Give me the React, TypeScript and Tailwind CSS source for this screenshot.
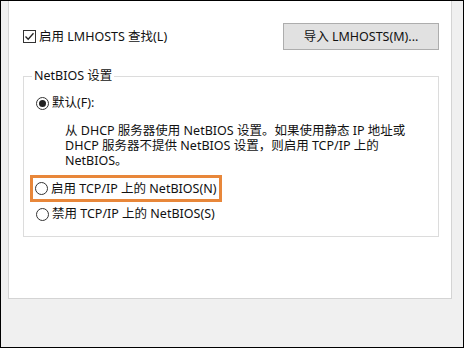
import React from "react";

function CheckBox() {
  return (
    <span className="flex h-[13px] w-[13px] shrink-0 items-center justify-center border border-[#333] bg-white">
      <svg width="11" height="11" viewBox="0 0 11 11">
        <path d="M1.5 5.5 L4.2 8.3 L9.5 2.3" fill="none" stroke="#222" strokeWidth="1.3" />
      </svg>
    </span>
  );
}

function Radio({ on }: { on?: boolean }) {
  return (
    <span className="flex h-[13px] w-[13px] shrink-0 items-center justify-center rounded-full border border-[#333] bg-white">
      {on && <span className="h-[7px] w-[7px] rounded-full bg-[#222]" />}
    </span>
  );
}

export default function App() {
  return (
    <div className="flex h-[348px] w-[464px] flex-col border border-black bg-[#f0f0f0] font-['Noto_Sans','Noto_Sans_CJK_SC',sans-serif] text-[12.5px] text-[#111]">
      <div className="ml-[7px] mr-[11px] h-[298px] border-x border-b border-[#d4d4d4] bg-white pl-[14px] pr-[12px] pt-[22px]">
        <div className="flex h-[27px] items-center justify-between">
          <div className="flex items-center gap-[3px]">
            <CheckBox />
            <span className="leading-[16px]">启用 LMHOSTS 查找(L)</span>
          </div>
          <button className="h-[27px] w-[156px] border border-[#adadad] bg-[#e1e1e1] text-[12.5px] leading-[16px] text-[#111]">
            导入 LMHOSTS(M)...
          </button>
        </div>
        <fieldset className="mt-[18px] border border-[#dcdcdc] pb-[14px]">
          <legend className="ml-[8px] px-[2px] leading-[16px]">NetBIOS 设置</legend>
          <div className="mt-[11px] flex h-[16px] items-center gap-[3px] pl-[12px]">
            <Radio on />
            <span className="leading-[16px]">默认(F):</span>
          </div>
          <div className="mt-[12px] pl-[41px] leading-[15px]">
            <div className="h-[15px] whitespace-nowrap">从 DHCP 服务器使用 NetBIOS 设置。如果使用静态 IP 地址或</div>
            <div className="h-[15px] whitespace-nowrap">DHCP 服务器不提供 NetBIOS 设置，则启用 TCP/IP 上的</div>
            <div className="h-[15px] whitespace-nowrap">NetBIOS。</div>
          </div>
          <div className="ml-[6px] mt-[7px] flex h-[27px] w-[192px] items-center gap-[3px] border-[3px] border-[#e8873a] pl-[2px]">
            <Radio />
            <span className="whitespace-nowrap leading-[16px]">启用 TCP/IP 上的 NetBIOS(N)</span>
          </div>
          <div className="mt-[4px] flex h-[16px] items-center gap-[3px] pl-[12px]">
            <Radio />
            <span className="leading-[16px]">禁用 TCP/IP 上的 NetBIOS(S)</span>
          </div>
        </fieldset>
      </div>
    </div>
  );
}
